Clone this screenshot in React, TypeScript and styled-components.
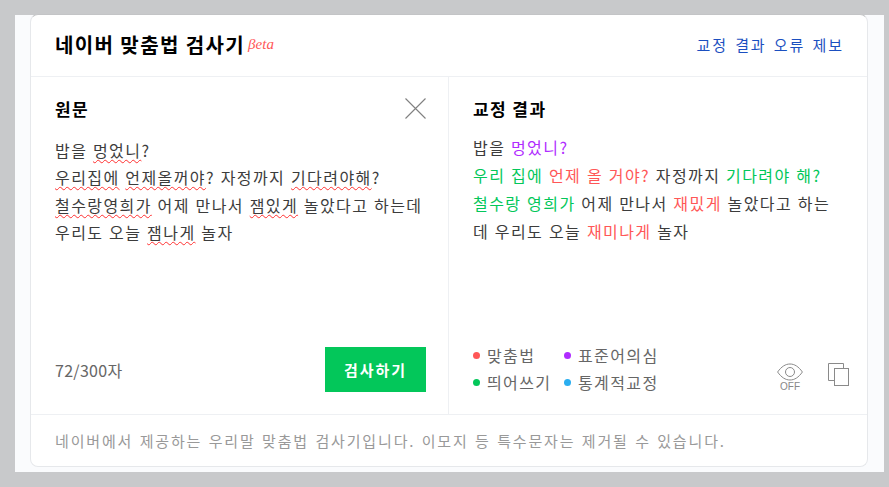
import React from "react";
import styled, { createGlobalStyle } from "styled-components";

const GlobalStyle = createGlobalStyle`
  html, body {
    margin: 0;
    padding: 0;
    background: #c8c9cb;
    font-family: "Noto Sans CJK KR", "Noto Sans", sans-serif;
  }
`;

const Page = styled.div`
  width: 889px;
  height: 487px;
  padding: 15px 5px 15px 15px;
  box-sizing: border-box;
`;

const Backdrop = styled.div`
  height: 457px;
  background: #fafbfd;
  padding-left: 15px;
  padding-right: 16px;
`;

const Card = styled.div`
  position: relative;
  top: -1px;
  height: 453px;
  box-sizing: border-box;
  display: flex;
  flex-direction: column;
  background: #fff;
  border: 1px solid #e6e8eb;
  border-top-color: #c3c4c6;
  border-radius: 8px;
`;

const Header = styled.div`
  height: 62px;
  box-sizing: border-box;
  flex: none;
  display: flex;
  align-items: center;
  justify-content: space-between;
  padding: 0 25px 3px 24px;
  border-bottom: 1px solid #eef0f3;
`;

const TitleRow = styled.div`
  display: flex;
  align-items: center;
  gap: 3px;
`;

const Title = styled.h1`
  margin: 0;
  font-size: 20px;
  font-weight: 700;
  color: #000;
  letter-spacing: 1.4px;
`;

const Beta = styled.span`
  font-family: "Liberation Serif", serif;
  font-style: italic;
  font-size: 15px;
  color: #ff5757;
`;

const ReportLink = styled.a`
  font-size: 15px;
  color: #1b4fc0;
  letter-spacing: 1.9px;
  word-spacing: 2px;
  margin-right: -1.9px;
`;

const Body = styled.div`
  height: 337px;
  flex: none;
  display: flex;
`;

const Pane = styled.div<{ $divided?: boolean }>`
  width: ${(p) => (p.$divided ? "418px" : "419px")};
  flex: none;
  box-sizing: border-box;
  padding: ${(p) => (p.$divided ? "0 22px 0 24px" : "0 19px 0 24px")};
  display: flex;
  flex-direction: column;
  border-right: ${(p) => (p.$divided ? "1px solid #eef0f3" : "none")};
`;

const PaneHead = styled.div`
  height: 62px;
  flex: none;
  display: flex;
  align-items: center;
  justify-content: space-between;
`;

const PaneTitle = styled.h2`
  margin: 0;
  font-size: 17px;
  font-weight: 700;
  color: #000;
  letter-spacing: 1.4px;
`;

const CloseButton = styled.button`
  border: 0;
  padding: 0;
  background: none;
  width: 21px;
  height: 21px;
  display: block;
`;

const Text = styled.div<{ $lh: number; $top: number }>`
  flex: 1;
  font-size: 16px;
  line-height: ${(p) => p.$lh}px;
  color: #3c3c3c;
  letter-spacing: 1.42px;
  word-spacing: 0.7px;
  margin-top: ${(p) => p.$top}px;
  white-space: pre-wrap;
`;

const Wavy = styled.span`
  text-decoration: underline wavy #ff3030 1.4px;
  text-underline-offset: 2px;
`;

const Fix = styled.span<{ $c: string }>`
  color: ${(p) => p.$c};
`;

const PaneFoot = styled.div`
  height: 67px;
  flex: none;
  display: flex;
  align-items: flex-start;
  justify-content: space-between;
`;

const Count = styled.span`
  font-size: 16px;
  color: #666;
  line-height: 46px;
  letter-spacing: 0.3px;
`;

const CheckButton = styled.button`
  width: 101px;
  height: 45px;
  border: 0;
  background: #03c75a;
  color: #fff;
  font-family: inherit;
  font-size: 15px;
  font-weight: 700;
  letter-spacing: 2px;
`;

const Legend = styled.div`
  display: grid;
  grid-template-columns: 91px auto;
  margin-top: -5px;
  font-size: 16px;
  color: #666;
  line-height: 27px;
  letter-spacing: 1.4px;
`;

const LegendItem = styled.div<{ $c: string }>`
  display: flex;
  align-items: center;
  gap: 7px;
  &::before {
    content: "";
    width: 7px;
    height: 7px;
    border-radius: 50%;
    background: ${(p) => p.$c};
  }
`;

const Tools = styled.div`
  display: flex;
  align-items: flex-start;
  gap: 25px;
  padding-top: 16px;
`;

const EyeToggle = styled.div`
  width: 26px;
  display: flex;
  flex-direction: column;
  align-items: center;
  font-family: "Liberation Sans", sans-serif;
  font-size: 10px;
  line-height: 12px;
  color: #888;
`;

const Footer = styled.div`
  flex: 1;
  display: flex;
  align-items: center;
  padding: 0 24px;
  border-top: 1px solid #eef0f3;
  font-size: 15px;
  color: #999;
  letter-spacing: 1.85px;
  word-spacing: 1.2px;
`;

const GREEN = "#03c75a";
const RED = "#ff5757";
const PURPLE = "#b02cff";

export default function App() {
  return (
    <>
      <GlobalStyle />
      <Page>
        <Backdrop>
          <Card>
            <Header>
              <TitleRow>
                <Title>네이버 맞춤법 검사기</Title>
                <Beta>βeta</Beta>
              </TitleRow>
              <ReportLink>교정 결과 오류 제보</ReportLink>
            </Header>
            <Body>
              <Pane $divided>
                <PaneHead>
                  <PaneTitle>원문</PaneTitle>
                  <CloseButton aria-label="닫기">
                    <svg width="21" height="21" viewBox="0 0 21 21">
                      <path d="M.5.5l20 20M20.500.5l-20 20" stroke="#808080" strokeWidth="1.1" fill="none" />
                    </svg>
                  </CloseButton>
                </PaneHead>
                <Text $lh={27.4} $top={-2}>
                  밥을 <Wavy>멍었니</Wavy>?{"\n"}
                  <Wavy>우리집에</Wavy> <Wavy>언제올꺼야</Wavy>? 자정까지 <Wavy>기다려야해</Wavy>?{"\n"}
                  <Wavy>철수랑영희가</Wavy> 어제 만나서 <Wavy>잼있게</Wavy> 놀았다고 하는데{"\n"}
                  우리도 오늘 <Wavy>잼나게</Wavy> 놀자
                </Text>
                <PaneFoot>
                  <Count>72/300자</Count>
                  <CheckButton>검사하기</CheckButton>
                </PaneFoot>
              </Pane>
              <Pane>
                <PaneHead>
                  <PaneTitle>교정 결과</PaneTitle>
                </PaneHead>
                <Text $lh={28} $top={-6}>
                  밥을 <Fix $c={PURPLE}>멍었니?</Fix>{"\n"}
                  <Fix $c={GREEN}>우리 집에</Fix> <Fix $c={RED}>언제 올 거야?</Fix> 자정까지 <Fix $c={GREEN}>기다려야 해?</Fix>{"\n"}
                  <Fix $c={GREEN}>철수랑 영희가</Fix> 어제 만나서 <Fix $c={RED}>재밌게</Fix> 놀았다고 하는{"\n"}
                  데 우리도 오늘 <Fix $c={RED}>재미나게</Fix> 놀자
                </Text>
                <PaneFoot>
                  <Legend>
                    <LegendItem $c="#ff5757">맞춤법</LegendItem>
                    <LegendItem $c="#b02cff">표준어의심</LegendItem>
                    <LegendItem $c="#03c75a">띄어쓰기</LegendItem>
                    <LegendItem $c="#2aaef0">통계적교정</LegendItem>
                  </Legend>
                  <Tools>
                    <EyeToggle>
                      <svg width="26" height="18" viewBox="0 0 26 18">
                        <path d="M.6 9C4.500 3.500 8.500 1 13 1s8.500 2.500 12.400 8C21.500 14.500 17.500 17 13 17S4.500 14.500.6 9Z" fill="none" stroke="#8a8a8a" />
                        <circle cx="13" cy="9" r="4.500" fill="none" stroke="#8a8a8a" />
                      </svg>
                      OFF
                    </EyeToggle>
                    <svg width="21" height="23" viewBox="0 0 21 23">
                      <path d="M6 17.500H.5V.5h15v5" fill="none" stroke="#8a8a8a" />
                      <rect x="6.500" y="5.500" width="14" height="17" fill="#fff" stroke="#8a8a8a" />
                    </svg>
                  </Tools>
                </PaneFoot>
              </Pane>
            </Body>
            <Footer>네이버에서 제공하는 우리말 맞춤법 검사기입니다. 이모지 등 특수문자는 제거될 수 있습니다.</Footer>
          </Card>
        </Backdrop>
      </Page>
    </>
  );
}
